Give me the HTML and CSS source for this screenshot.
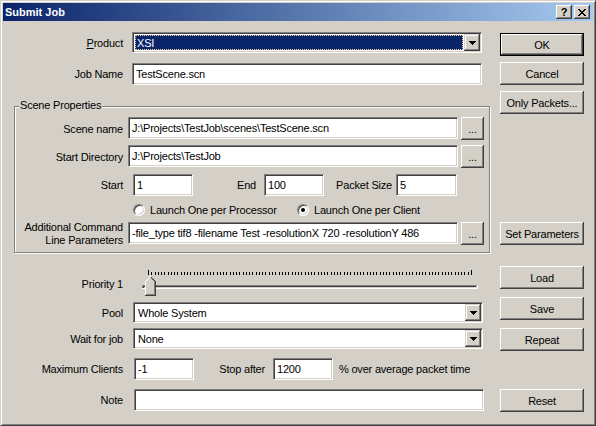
FILE: index.html
```html
<!DOCTYPE html>
<html>
<head>
<meta charset="utf-8">
<title>Submit Job</title>
<link rel="stylesheet" href="styles.css">
</head>
<body>
<div class="window">
  <div class="titlebar">
    <span class="title">Submit Job</span>
    <div class="capbtns">
      <div class="capbtn">?</div>
      <div class="capbtn"><svg width="8" height="7" viewBox="0 0 8 7" shape-rendering="crispEdges"><path fill="#000" d="M0 0h2v1h-2zM6 0h2v1h-2zM1 1h2v1h-2zM5 1h2v1h-2zM2 2h4v1h-4zM3 3h2v1h-2zM2 4h4v1h-4zM1 5h2v1h-2zM5 5h2v1h-2zM0 6h2v1h-2zM6 6h2v1h-2z"/></svg></div>
    </div>
  </div>
  <div class="client">
    <div class="left">
      <div class="row r-product">
        <span class="lbl"><u>P</u>roduct</span>
        <div class="combo ml9 w350">
          <div class="combo-text"><span class="sel">XSI</span></div>
          <div class="combo-btn"><svg width="7" height="4" viewBox="0 0 7 4" shape-rendering="crispEdges"><path fill="#000" d="M0 0h7v1h-7zM1 1h5v1h-5zM2 2h3v1h-3zM3 3h1v1h-1z"/></svg></div>
        </div>
      </div>
      <div class="row r-job">
        <span class="lbl">Job Name</span>
        <div class="edit ml9 w350">TestScene.scn</div>
      </div>

      <div class="group">
        <span class="legend">Scene Properties</span>
        <div class="grow r-scene">
          <span class="glbl">Scene name</span>
          <div class="edit ml5 w330">J:\Projects\TestJob\scenes\TestScene.scn</div>
          <div class="btn dots">...</div>
        </div>
        <div class="grow r-dir">
          <span class="glbl">Start Directory</span>
          <div class="edit ml5 w330">J:\Projects\TestJob</div>
          <div class="btn dots">...</div>
        </div>
        <div class="grow r-start">
          <span class="glbl">Start</span>
          <div class="edit ml10 w60">1</div>
          <span class="lbl-end">End</span>
          <div class="edit ml8 w60">100</div>
          <span class="lbl-packet">Packet Size</span>
          <div class="edit ml4 w61">5</div>
        </div>
        <div class="radio-row">
          <div class="opt opt-first"><span class="radio"></span><span>Launch One per Processor</span></div>
          <div class="opt"><span class="radio checked"></span><span>Launch One per Client</span></div>
        </div>
        <div class="grow r-addl">
          <span class="glbl two">Additional Command<br>Line Parameters</span>
          <div class="edit ml5 w330">-file_type tif8 -filename Test -resolutionX 720 -resolutionY 486</div>
          <div class="btn dots">...</div>
        </div>
      </div>

      <div class="row r-slider">
        <span class="lbl">Priority 1</span>
        <svg class="slider" width="340" height="30" viewBox="0 0 340 30" shape-rendering="crispEdges">
          <path stroke="#000" stroke-width="1" fill="none" d="M8.5 2v5M11.5 4v3M15.5 4v3M18.5 4v3M21.5 4v3M24.5 4v3M28.5 4v3M31.5 4v3M34.5 4v3M37.5 4v3M41.5 4v3M44.5 4v3M47.5 4v3M50.5 4v3M54.5 4v3M57.5 4v3M60.5 4v3M63.5 4v3M67.5 4v3M70.5 4v3M73.5 4v3M77.5 4v3M80.5 4v3M83.5 4v3M86.5 4v3M90.5 4v3M93.5 4v3M96.5 4v3M99.5 4v3M103.5 4v3M106.5 4v3M109.5 4v3M112.5 4v3M116.5 4v3M119.5 4v3M122.5 4v3M125.5 4v3M129.5 4v3M132.5 4v3M135.5 4v3M139.5 4v3M142.5 4v3M145.5 4v3M148.5 4v3M152.5 4v3M155.5 4v3M158.5 4v3M161.5 4v3M165.5 4v3M168.5 4v3M171.5 4v3M174.5 4v3M178.5 4v3M181.5 4v3M184.5 4v3M187.5 4v3M191.5 4v3M194.5 4v3M197.5 4v3M200.5 4v3M204.5 4v3M207.5 4v3M210.5 4v3M214.5 4v3M217.5 4v3M220.5 4v3M223.5 4v3M227.5 4v3M230.5 4v3M233.5 4v3M236.5 4v3M240.5 4v3M243.5 4v3M246.5 4v3M249.5 4v3M253.5 4v3M256.5 4v3M259.5 4v3M262.5 4v3M266.5 4v3M269.5 4v3M272.5 4v3M276.5 4v3M279.5 4v3M282.5 4v3M285.5 4v3M289.5 4v3M292.5 4v3M295.5 4v3M298.5 4v3M302.5 4v3M305.5 4v3M308.5 4v3M311.5 4v3M315.5 4v3M318.5 4v3M321.5 4v3M324.5 4v3M328.5 4v3M331.5 2v5"/>
          <rect x="2" y="17" width="335" height="1" fill="#808080"/>
          <rect x="2" y="17" width="1" height="3" fill="#808080"/>
          <rect x="3" y="18" width="333" height="1" fill="#404040"/>
          <rect x="3" y="18" width="1" height="2" fill="#404040"/>
          <rect x="2" y="20" width="336" height="1" fill="#ffffff"/>
          <rect x="337" y="17" width="1" height="4" fill="#ffffff"/>
          <g transform="translate(5,8)">
            <polygon points="1,5 5,1 9,5 9,18 1,18" fill="#D4D0C8"/>
            <path fill="#ffffff" d="M0 5h1v14h-1zM1 4h1v1h-1zM2 3h1v1h-1zM3 2h1v1h-1zM4 1h1v1h-1zM5 0h1v1h-1z"/>
            <path fill="#808080" d="M9 5h1v14h-1zM1 18h8v1h-8zM6 2h1v1h-1zM7 3h1v1h-1zM8 4h1v1h-1z"/>
            <path fill="#404040" d="M10 5h1v15h-1zM0 19h10v1h-10zM6 1h1v1h-1zM7 2h1v1h-1zM8 3h1v1h-1zM9 4h1v1h-1z"/>
          </g>
        </svg>
      </div>
      <div class="row r-pool">
        <span class="lbl">Pool</span>
        <div class="combo ml10 w350">
          <div class="combo-text"><span class="val">Whole System</span></div>
          <div class="combo-btn"><svg width="7" height="4" viewBox="0 0 7 4" shape-rendering="crispEdges"><path fill="#000" d="M0 0h7v1h-7zM1 1h5v1h-5zM2 2h3v1h-3zM3 3h1v1h-1z"/></svg></div>
        </div>
      </div>
      <div class="row r-wait">
        <span class="lbl">Wait for job</span>
        <div class="combo ml10 w350">
          <div class="combo-text"><span class="val">None</span></div>
          <div class="combo-btn"><svg width="7" height="4" viewBox="0 0 7 4" shape-rendering="crispEdges"><path fill="#000" d="M0 0h7v1h-7zM1 1h5v1h-5zM2 2h3v1h-3zM3 3h1v1h-1z"/></svg></div>
        </div>
      </div>
      <div class="row r-max">
        <span class="lbl">Maximum Clients</span>
        <div class="edit ml11 w60">-1</div>
        <span class="lbl-stop">Stop after</span>
        <div class="edit ml8 w60">1200</div>
        <span class="after">% over average packet time</span>
      </div>
      <div class="row r-note">
        <span class="lbl">Note</span>
        <div class="edit ml11 w350"></div>
      </div>
    </div>

    <div class="right">
      <div class="btn default b-ok">OK</div>
      <div class="btn b-cancel">Cancel</div>
      <div class="btn b-only">Only Packets...</div>
      <div class="btn b-set">Set Parameters</div>
      <div class="btn b-load">Load</div>
      <div class="btn b-save">Save</div>
      <div class="btn b-repeat">Repeat</div>
      <div class="btn b-reset">Reset</div>
    </div>
  </div>
</div>
</body>
</html>
```

FILE: styles.css
```css
* { box-sizing: border-box; }
html, body { margin: 0; padding: 0; }
body {
  background: #D4D0C8;
  font-family: "Liberation Sans", Arial, sans-serif;
  font-size: 11px;
  letter-spacing: -0.2px;
  color: #000;
}
.window {
  width: 596px;
  height: 426px;
  border: 1px solid;
  border-color: #D4D0C8 #404040 #404040 #D4D0C8;
  box-shadow: inset 1px 1px #ffffff, inset -1px -1px #808080;
  padding: 2px;
  display: flex;
  flex-direction: column;
  overflow: hidden;
}
.titlebar {
  flex: none;
  height: 18px;
  background: linear-gradient(to right, #0A246A, #A6CAF0);
  display: flex;
  align-items: center;
  padding-left: 2px;
}
.title {
  flex: 1;
  color: #fff;
  font-weight: bold;
  font-size: 11px;
  letter-spacing: 0;
}
.capbtns { display: flex; gap: 2px; margin-right: 3px; }
.capbtn {
  width: 16px;
  height: 14px;
  background: #D4D0C8;
  box-shadow: inset -1px -1px #404040, inset 1px 1px #ffffff, inset -2px -2px #808080;
  display: flex;
  align-items: center;
  justify-content: center;
  font-weight: bold;
  font-size: 11px;
  line-height: 1;
}
.client { flex: 1; display: flex; }
.left { width: 487px; display: flex; flex-direction: column; }
.right { width: 84px; margin-left: 10px; display: flex; flex-direction: column; }

.row { display: flex; align-items: center; flex: none; }
.lbl { width: 120px; flex: none; text-align: right; white-space: nowrap; }
.r-product { margin-top: 11px; height: 21px; }
.r-job { margin-top: 10px; height: 22px; }
.r-slider { margin-top: 15px; height: 30px; }
.r-slider .lbl { padding-top: 2px; }
.slider { margin-left: 17px; display: block; flex: none; }
.r-pool { margin-top: 4px; height: 21px; }
.r-wait { margin-top: 5px; height: 21px; }
.r-max { margin-top: 9px; height: 22px; }
.r-note { margin-top: 9px; height: 22px; }

.ml4 { margin-left: 4px; }
.ml5 { margin-left: 5px; }
.ml8 { margin-left: 8px; }
.ml9 { margin-left: 9px; }
.ml10 { margin-left: 10px; }
.ml11 { margin-left: 11px; }
.w60 { width: 60px; }
.w61 { width: 61px; }
.w330 { width: 330px; }
.w350 { width: 350px; }

.edit {
  flex: none;
  height: 22px;
  background: #fff;
  border: 1px solid;
  border-color: #808080 #ffffff #ffffff #808080;
  box-shadow: inset 1px 1px #404040, inset -1px -1px #D4D0C8;
  padding: 0 3px;
  display: flex;
  align-items: center;
  white-space: nowrap;
  overflow: hidden;
}
.combo {
  flex: none;
  height: 21px;
  background: #fff;
  border: 1px solid;
  border-color: #808080 #ffffff #ffffff #808080;
  box-shadow: inset 1px 1px #404040, inset -1px -1px #D4D0C8;
  padding: 1px;
  display: flex;
}
.combo-text { flex: 1; display: flex; align-items: stretch; padding: 1px; }
.combo-text .val { display: flex; align-items: center; padding-left: 2px; }
.sel {
  flex: 1;
  display: flex;
  align-items: center;
  padding-left: 1px;
  background: #0A246A;
  color: #fff;
  border: 1px dotted #F5DB95;
}
.combo-btn {
  width: 16px;
  flex: none;
  background: #D4D0C8;
  box-shadow: inset -1px -1px #404040, inset 1px 1px #D4D0C8, inset -2px -2px #808080, inset 2px 2px #ffffff;
  display: flex;
  align-items: center;
  justify-content: center;
}
.combo-btn svg { display: block; margin-left: 1px; }

.btn {
  flex: none;
  height: 23px;
  background: #D4D0C8;
  box-shadow: inset -1px -1px #404040, inset 1px 1px #ffffff, inset -2px -2px #808080;
  display: flex;
  align-items: center;
  justify-content: center;
  white-space: nowrap;
}
.btn.default { border: 1px solid #000; }
.b-ok { margin-top: 12px; }
.b-cancel { margin-top: 6px; }
.b-only { margin-top: 6px; }
.b-set { margin-top: 108px; }
.b-load { margin-top: 21px; }
.b-save { margin-top: 8px; }
.b-repeat { margin-top: 8px; }
.b-reset { margin-top: 38px; }

.group {
  flex: none;
  margin: 21px 0 0 11px;
  width: 476px;
  border: 1px solid #808080;
  box-shadow: inset 1px 1px #ffffff, 1px 1px #ffffff;
  padding: 0 0 7px 0;
  display: flex;
  flex-direction: column;
}
.legend {
  align-self: flex-start;
  margin: -8px 0 0 4px;
  padding: 0 1px;
  line-height: 13px;
  background: #D4D0C8;
}
.grow { display: flex; align-items: flex-start; flex: none; }
.glbl {
  width: 108px;
  flex: none;
  text-align: right;
  white-space: nowrap;
  align-self: center;
}
.glbl.two { line-height: 13px; }
.dots { width: 23px; margin-left: 3px; }
.r-scene { margin-top: 5px; height: 23px; }
.r-dir { margin-top: 5px; height: 23px; }
.r-start { margin-top: 6px; height: 22px; }
.r-addl { margin-top: 6px; height: 23px; }
.lbl-end { width: 63px; flex: none; text-align: right; align-self: center; }
.lbl-packet { width: 68px; flex: none; text-align: right; align-self: center; }
.lbl-stop { width: 71px; flex: none; text-align: right; }
.after { margin-left: 6px; white-space: nowrap; }

.radio-row {
  margin-top: 7px;
  height: 13px;
  display: flex;
  align-items: center;
  padding-left: 118px;
}
.opt { display: flex; align-items: center; gap: 5px; white-space: nowrap; }
.opt-first { width: 164px; }
.radio {
  width: 12px;
  height: 12px;
  flex: none;
  border-radius: 50%;
  border: 1px solid;
  border-color: #808080 #ffffff #ffffff #808080;
  background: #fff;
  box-shadow: inset 1px 1px #404040, inset -1px -1px #D4D0C8;
  display: flex;
  align-items: center;
  justify-content: center;
}
.radio.checked::after {
  content: "";
  width: 4px;
  height: 4px;
  border-radius: 50%;
  background: #000;
}
```
